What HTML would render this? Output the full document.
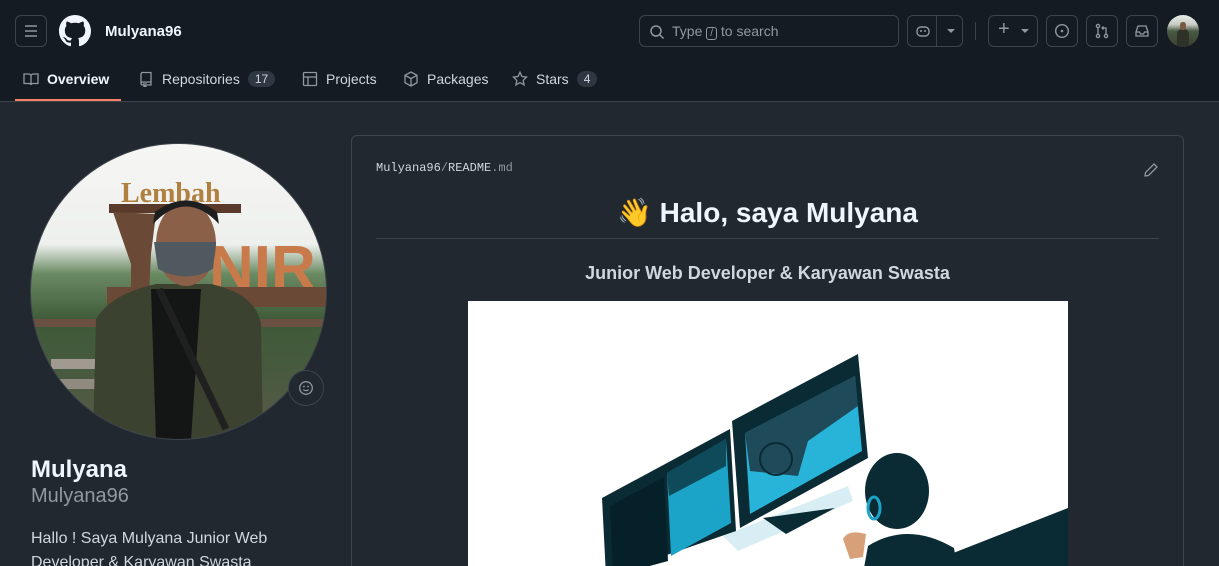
<!DOCTYPE html>
<html><head><style>
*{box-sizing:border-box;margin:0;padding:0}
html,body{width:1219px;height:566px;overflow:hidden}
body{background:#212830;font-family:"Liberation Sans",sans-serif;color:#d1d7e0;position:relative}
.hdr{position:absolute;left:0;top:0;width:1219px;height:102px;background:#151b23;border-bottom:1px solid #3d444d}
.btn{position:absolute;border:1px solid #3d444d;border-radius:6px;height:32px;top:15px}
.tab{position:absolute;top:71px;font-size:14px;color:#d1d7e0;display:flex;align-items:center;gap:8px}
.cnt{background:#2f3742;border-radius:10px;padding:1px 7px;font-size:12px}
svg{display:block}
</style></head><body>
<div class="hdr">
 <div class="btn" style="left:15px;width:32px"><svg width="30" height="30" viewBox="0 0 30 30"><path d="M9 10h12M9 15h12M9 20h12" stroke="#9198a1" stroke-width="1.5"/></svg></div>
 <svg style="position:absolute;left:59px;top:15px" width="32" height="32" viewBox="0 0 16 16"><path fill="#f0f6fc" d="M8 0C3.58 0 0 3.58 0 8c0 3.54 2.29 6.53 5.47 7.59.4.07.55-.17.55-.38 0-.19-.01-.82-.01-1.49-2.01.37-2.53-.49-2.69-.94-.09-.23-.48-.94-.82-1.13-.28-.15-.68-.52-.01-.53.63-.01 1.08.58 1.230.82.72 1.21 1.870.87 2.33.66.07-.52.28-.87.51-1.07-1.78-.2-3.64-.89-3.64-3.95 0-.87.31-1.59.82-2.15-.08-.2-.36-1.02.08-2.12 0 0 .67-.21 2.2.82.64-.18 1.32-.27 2-.27.68 0 1.36.09 2 .27 1.53-1.04 2.2-.82 2.2-.82.44 1.1.16 1.92.08 2.12.51.56.82 1.27.82 2.15 0 3.07-1.87 3.75-3.65 3.95.29.25.54.73.54 1.48 0 1.07-.01 1.93-.01 2.2 0 .21.15.46.55.38A8.013 8.013 0 0016 8c0-4.42-3.58-8-8-8z"/></svg>
 <div style="position:absolute;left:105px;top:23px;font-size:15px;font-weight:bold;color:#f0f6fc">Mulyana96</div>
 <div class="btn" style="left:639px;width:260px;color:#9198a1;font-size:14px;padding:7px 0 0 32px">Type <span style="border:1px solid #9198a1;border-radius:3px;font-size:10px;padding:0 3px">/</span> to search
  <svg style="position:absolute;left:9px;top:8px" width="16" height="16" viewBox="0 0 16 16"><circle cx="7" cy="7" r="5" fill="none" stroke="#9198a1" stroke-width="1.5"/><path d="M11 11l3.5 3.5" stroke="#9198a1" stroke-width="1.5"/></svg></div>
 <div class="btn" style="left:907px;width:56px"><div style="position:absolute;left:28px;top:0;height:30px;border-left:1px solid #3d444d"></div><svg style="position:absolute;left:7px;top:7px" width="16" height="16" viewBox="0 0 16 16"><rect x="2" y="4" width="12" height="9" rx="4" fill="none" stroke="#9198a1" stroke-width="1.4"/><circle cx="6" cy="8" r="1" fill="#9198a1"/><circle cx="10" cy="8" r="1" fill="#9198a1"/></svg><div style="position:absolute;left:39px;top:13px;border:4px solid transparent;border-top-color:#9198a1"></div></div>
 <div style="position:absolute;left:975px;top:22px;height:18px;border-left:1px solid #3d444d"></div>
 <div class="btn" style="left:988px;width:50px;color:#9198a1;font-size:20px;padding:2px 0 0 9px">+<div style="position:absolute;left:32px;top:13px;border:4px solid transparent;border-top-color:#9198a1"></div></div>
 <div class="btn" style="left:1046px;width:32px"><svg style="margin:7px" width="16" height="16" viewBox="0 0 16 16"><circle cx="8" cy="8" r="6.3" fill="none" stroke="#9198a1" stroke-width="1.4"/><circle cx="8" cy="8" r="1.3" fill="#9198a1"/></svg></div>
 <div class="btn" style="left:1086px;width:32px"><svg style="margin:7px" width="16" height="16" viewBox="0 0 16 16"><circle cx="4" cy="3" r="1.6" fill="none" stroke="#9198a1" stroke-width="1.3"/><circle cx="4" cy="13" r="1.6" fill="none" stroke="#9198a1" stroke-width="1.3"/><circle cx="12" cy="13" r="1.6" fill="none" stroke="#9198a1" stroke-width="1.3"/><path d="M4 5v6M12 11V5H8M9.5 3.5L8 5l1.5 1.5" fill="none" stroke="#9198a1" stroke-width="1.3"/></svg></div>
 <div class="btn" style="left:1126px;width:32px"><svg style="margin:7px" width="16" height="16" viewBox="0 0 16 16"><path d="M2 9l2-6h8l2 6v4H2zM2 9h3.5l1 2h3l1-2H14" fill="none" stroke="#9198a1" stroke-width="1.3"/></svg></div>
 <div style="position:absolute;left:1167px;top:15px;width:32px;height:32px;border-radius:50%;overflow:hidden;background:linear-gradient(180deg,#e8ece8 0%,#c8ccc4 30%,#4a5a44 50%,#3a4030 100%)"><div style="position:absolute;left:10px;top:14px;width:12px;height:18px;background:#2e3228;border-radius:5px 5px 0 0"></div><div style="position:absolute;left:13px;top:7px;width:6px;height:8px;background:#7a5a44;border-radius:40%"></div></div>
 <div class="tab" style="left:23px;font-weight:bold;color:#f0f6fc"><svg width="16" height="16" viewBox="0 0 16 16"><path d="M1 3h4.5c1.2 0 2.5.8 2.5 2v9c0-1-1-1.5-2-1.5H1zM15 3h-4.5C9.3 3 8 3.8 8 5v9c0-1 1-1.5 2-1.5h5z" fill="none" stroke="#9198a1" stroke-width="1.3"/></svg>Overview</div>
 <div style="position:absolute;left:15px;top:99px;width:106px;height:2px;background:#f78166"></div>
 <div class="tab" style="left:138px"><svg width="16" height="16" viewBox="0 0 16 16"><path d="M3 13V3a1.5 1.5 0 011.5-1.5H13V11H4.5A1.5 1.5 0 003 12.5 1.5 1.5 0 004.5 14H6M9 14h4v-3M6 12v3.5l1-.8 1 .8V12" fill="none" stroke="#9198a1" stroke-width="1.3"/></svg>Repositories <span class="cnt">17</span></div>
 <div class="tab" style="left:302px"><svg width="16" height="16" viewBox="0 0 16 16"><rect x="1.5" y="1.5" width="13" height="13" rx="1" fill="none" stroke="#9198a1" stroke-width="1.3"/><path d="M1.5 6h13M6 6v8.5" stroke="#9198a1" stroke-width="1.3"/></svg>Projects</div>
 <div class="tab" style="left:403px"><svg width="16" height="16" viewBox="0 0 16 16"><path d="M8 1l6 3.3v7.4L8 15l-6-3.3V4.3zM2 4.3L8 7.6l6-3.3M8 7.6V15" fill="none" stroke="#9198a1" stroke-width="1.3"/></svg>Packages</div>
 <div class="tab" style="left:512px"><svg width="16" height="16" viewBox="0 0 16 16"><path d="M8 1.3l2 4.2 4.6.6-3.4 3.2.9 4.6L8 11.6l-4.1 2.3.9-4.6L1.4 6.1l4.6-.6z" fill="none" stroke="#9198a1" stroke-width="1.3"/></svg>Stars <span class="cnt">4</span></div>
</div>

<div style="position:absolute;left:30px;top:143px;width:297px;height:297px;border-radius:50%;border:1px solid #3d444d;overflow:hidden;background:linear-gradient(180deg,#f6f6f4 0%,#eef0ee 34%,#6a8a62 44%,#3e5a38 60%,#4a5a40 80%,#5a5a48 100%)">
 <svg width="297" height="297" viewBox="0 0 297 297">
  <rect x="78" y="60" width="132" height="9" fill="#5a3a2a"/>
  <path d="M82 68 L100 120 L100 150 L118 150 L120 110 L125 70z" fill="#6a4a36"/>
  <text x="90" y="58" font-family="Liberation Serif,serif" font-size="28" fill="#b08040" font-weight="bold">Lembah</text>
  <text x="178" y="145" font-family="Liberation Sans,sans-serif" font-size="62" fill="#c87a4a" font-weight="bold">NIR</text>
  <rect x="76" y="143" width="222" height="20" fill="#6a4a36"/>
  <rect x="0" y="175" width="297" height="8" fill="#6a5040"/>
  <rect x="20" y="215" width="60" height="10" fill="#a09a90"/>
  <rect x="25" y="235" width="45" height="10" fill="#908a80"/>
  <path d="M62 297 L65 175 Q80 150 125 140 L180 140 Q225 150 230 180 L232 297z" fill="#3c4230"/>
  <path d="M120 145 L170 145 L160 297 L125 297z" fill="#141616"/>
  <path d="M128 145 L195 285" stroke="#202020" stroke-width="7"/>
  <ellipse cx="155" cy="100" rx="30" ry="42" fill="#8a6048"/>
  <path d="M122 80 Q155 45 188 80 L186 68 Q155 45 124 68z" fill="#1e1e1e"/>
  <path d="M123 98 L185 98 L182 125 Q155 140 127 125z" fill="#505860"/>
 </svg>
</div>
<div style="position:absolute;left:288px;top:370px;width:36px;height:36px;border-radius:50%;background:#212830;border:1px solid #3d444d"><svg style="margin:9px" width="16" height="16" viewBox="0 0 16 16"><circle cx="8" cy="8" r="6.3" fill="none" stroke="#9198a1" stroke-width="1.3"/><circle cx="6" cy="6.5" r=".9" fill="#9198a1"/><circle cx="10" cy="6.5" r=".9" fill="#9198a1"/><path d="M5.3 9.5c1.3 1.6 4.1 1.6 5.4 0" fill="none" stroke="#9198a1" stroke-width="1.2"/></svg></div>
<div style="position:absolute;left:31px;top:456px;font-size:24px;font-weight:bold;color:#f0f6fc">Mulyana</div>
<div style="position:absolute;left:31px;top:485px;font-size:20px;color:#9198a1">Mulyana96</div>
<div style="position:absolute;left:31px;top:527px;width:270px;height:39px;overflow:hidden;font-size:16px;line-height:24px;color:#d1d7e0">Hallo ! Saya Mulyana Junior Web Developer &amp; Karyawan Swasta</div>

<div style="position:absolute;left:351px;top:135px;width:833px;height:431px;border:1px solid #3d444d;border-bottom:none;border-radius:6px 6px 0 0;overflow:hidden">
 <div style="position:absolute;left:24px;top:25px;font-family:'Liberation Mono',monospace;font-size:12px;color:#d1d7e0">Mulyana96<span style="color:#9198a1">/</span>README<span style="color:#9198a1">.md</span></div>
 <svg style="position:absolute;left:791px;top:26px" width="16" height="16" viewBox="0 0 16 16"><path d="M11 2l3 3-8.5 8.5L2 14l.5-3.5z" fill="none" stroke="#9198a1" stroke-width="1.3"/></svg>
 <div style="position:absolute;left:0;width:831px;top:60px;text-align:center;font-size:28px;font-weight:bold;color:#f0f6fc">👋 Halo, saya Mulyana</div>
 <div style="position:absolute;left:24px;top:102px;width:783px;border-top:1px solid #3d444d"></div>
 <div style="position:absolute;left:0;width:831px;top:127px;text-align:center;font-size:18px;font-weight:bold;color:#d1d7e0">Junior Web Developer &amp; Karyawan Swasta</div>
 <div style="position:absolute;left:116px;top:165px;width:600px;height:300px;background:#fff;overflow:hidden">
  <svg width="600" height="300" viewBox="0 0 600 300">
   <path d="M255 235 L380 185 L385 200 L270 250z" fill="#d8eef4"/>
   <polygon points="134,197 262,128 268,230 138,275" fill="#0a2a34"/>
   <polygon points="199,172 258,138 263,222 203,255" fill="#1ba4c8"/>
   <polygon points="199,172 258,138 258,165 201,195" fill="#0e4a5a"/>
   <polygon points="142,205 196,176 200,260 145,275" fill="#06202a"/>
   <polygon points="264,120 390,53 400,157 272,227" fill="#0a2a34"/>
   <polygon points="277,132 387,75 394,150 282,213" fill="#27b4d8"/>
   <polygon points="277,132 387,75 390,105 340,140 330,175 282,170" fill="#1e4a5a"/>
   <circle cx="308" cy="158" r="16" fill="none" stroke="#0a2a34" stroke-width="2"/>
   <path d="M295 217 L367 207 L318 233z" fill="#0a2a34"/>
   <ellipse cx="429" cy="190" rx="32" ry="38" fill="#0a2a34"/>
   <ellipse cx="406" cy="207" rx="6" ry="11" fill="none" stroke="#1ba4c8" stroke-width="3"/>
   <path d="M375 238 Q380 228 398 233 L395 256 L382 258z" fill="#d8a078"/>
   <path d="M390 300 L400 245 Q440 220 486 247 L495 300z" fill="#0a2a34"/>
   <path d="M470 258 L600 207 L600 300 L470 300z" fill="#0a2a34"/>
  </svg>
 </div>
</div>
</body></html>
